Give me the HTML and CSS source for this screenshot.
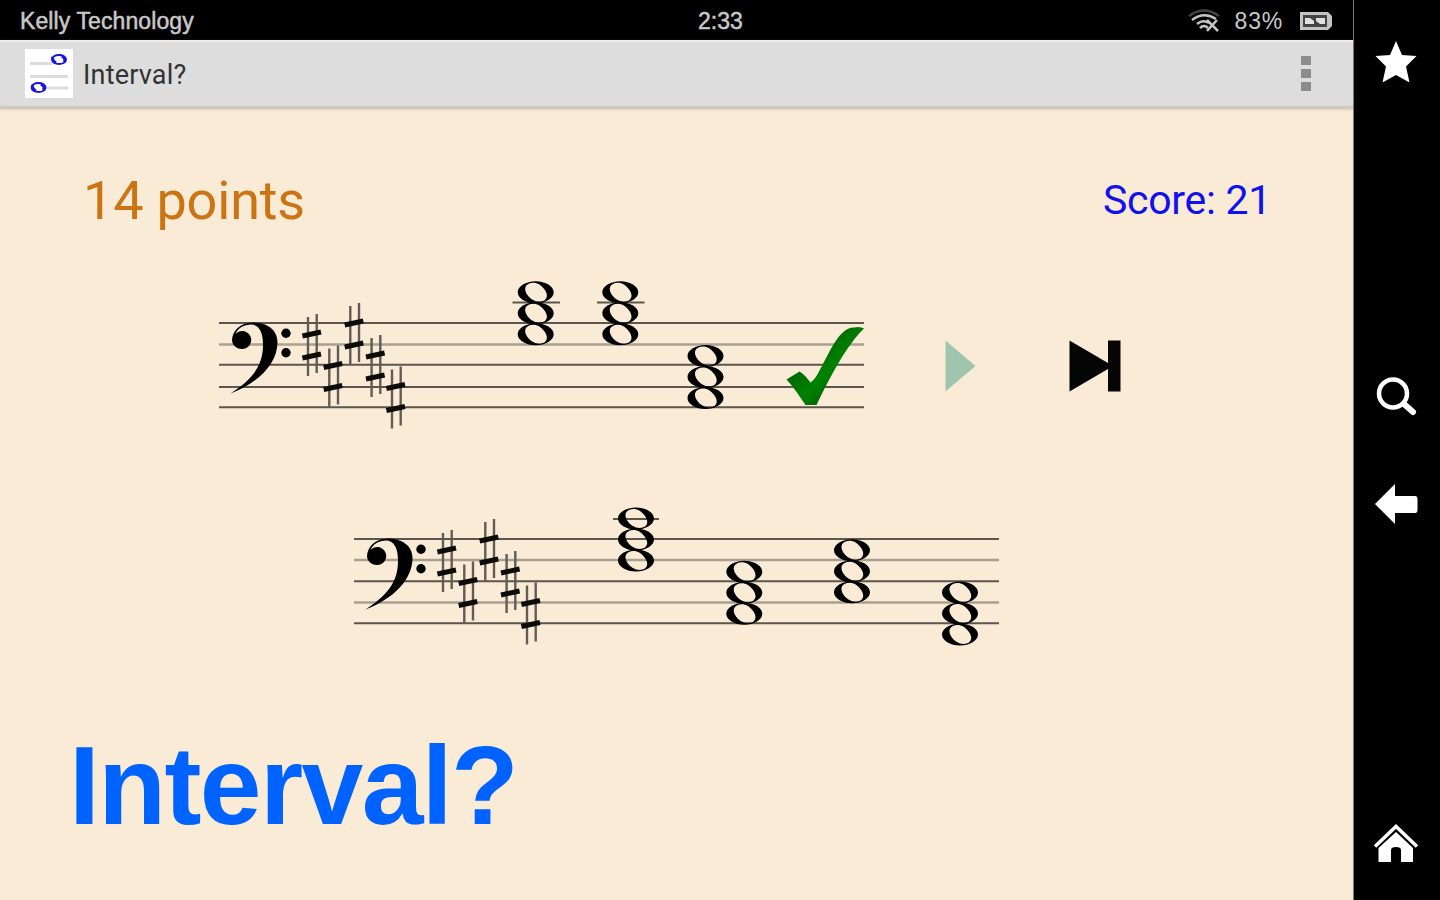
FILE: index.html
```html
<!DOCTYPE html>
<html lang="en">
<head>
    <meta charset="UTF-8">
    <meta name="viewport" content="width=device-width, initial-scale=1.0">
    <title>Interval?</title>
    <link rel="stylesheet" href="styles.css">
</head>
<body>
    <!-- Shared music symbols -->
    <svg class="symbols" width="0" height="0" aria-hidden="true">
        <symbol id="clef" overflow="visible">
            <path d="M11.5 113.5C39 103 58.5 84 58.5 62C58.5 49 47 42.5 34 42.5C21 42.5 13 51 13 61A10 9 0 0 0 23 69A9 9 0 1 0 16.5 54C19 48 25 44.5 32 44.5C40 44.5 44 52 44 65C44 87 32 100 11.5 113.5Z"/>
            <circle cx="67" cy="53.3" r="4.7"/>
            <circle cx="67" cy="72.7" r="4.7"/>
        </symbol>
        <symbol id="sharp" overflow="visible">
            <path class="sharp-stem" d="M-3.7 -28V31M5 -31V28"/>
            <path class="sharp-bar" d="M-9.3 -9L9.3 -13M-9.3 13L9.3 9"/>
        </symbol>
        <symbol id="note" overflow="visible">
            <path fill-rule="evenodd" d="M-18 0C-18 -6 -10 -11 0 -11S18 -6 18 0S10 11 0 11S-18 6 -18 0ZM-7 -8.5C-13 -6 -11 2 -4 7C1 10.2 6 10 9 8C14 4 10 -3 4 -7.5C0 -10 -4 -10 -7 -8.5Z"/>
        </symbol>
        <symbol id="chord" overflow="visible">
            <use href="#note" y="-21"/>
            <use href="#note"/>
            <use href="#note" y="21"/>
        </symbol>
        <symbol id="signature" overflow="visible">
            <use href="#clef"/>
            <use href="#sharp" x="92.7" y="65"/>
            <use href="#sharp" x="114" y="96.5"/>
            <use href="#sharp" x="135" y="54"/>
            <use href="#sharp" x="156.3" y="86"/>
            <use href="#sharp" x="176.7" y="117.5"/>
        </symbol>
        <linearGradient id="tickFill" x1="0" y1="0" x2="1" y2="1">
            <stop offset="0.25" stop-color="#005c00"/>
            <stop offset="0.55" stop-color="#008200"/>
            <stop offset="0.8" stop-color="#005c00"/>
        </linearGradient>
    </svg>

    <div class="device">
        <div class="screen">
            <div class="status-bar">
                <span class="owner">Kelly Technology</span>
                <span class="clock">2:33</span>
                <div class="status-icons">
                    <svg class="wifi" width="32" height="26" viewBox="0 0 32 26">
                        <path d="M1 8Q16 -3 31 8" stroke="#444"/>
                        <path d="M4 12Q16 3 28 11M9 16Q15 11 21 15M12 20Q16 16 20 20" stroke="#c4c4c4"/>
                        <path d="M19 12L30 23M29 12L19 23" stroke="#c4c4c4"/>
                    </svg>
                    <span class="battery-level">83%</span>
                    <svg width="35" height="20" viewBox="0 0 35 20">
                        <path d="M1 1H29L33 5V15L29 19H1Z" fill="#c4c4c4"/>
                        <rect x="4" y="4" width="24" height="12" fill="#444"/>
                        <path d="M6 7H11L15 10V13H6ZM17 7H26V13H21L17 10Z" fill="#e0e0e0"/>
                    </svg>
                </div>
            </div>

            <div class="action-bar">
                <svg class="app-icon" width="48" height="49" viewBox="0 0 48 49">
                    <rect width="48" height="49" fill="#fff"/>
                    <path d="M5 14.5H27M5 27.5H43M21 39H43" stroke="#dcdcdc" stroke-width="3"/>
                    <g fill="none" stroke="#1414e6">
                        <ellipse cx="34" cy="10.5" rx="7" ry="4.5" stroke-width="1.8"/>
                        <path d="M28 8Q26.5 11 31 14M37 7Q41.5 10 39 13" stroke-width="3"/>
                        <ellipse cx="13.5" cy="38.5" rx="7" ry="4.5" stroke-width="1.8"/>
                        <path d="M8 36Q6 39 11 42M16 35Q21 38 18 41" stroke-width="3"/>
                    </g>
                </svg>
                <span class="app-title">Interval?</span>
                <div class="overflow-menu"><i></i><i></i><i></i></div>
            </div>

            <div class="quiz">
                <div class="score-row">
                    <span class="points">14 points</span>
                    <span class="score">Score: 21</span>
                </div>

                <div class="question">
                    <svg class="staff" width="645" height="150" viewBox="0 0 645 150">
                        <path class="line" d="M0 43H645M0 84.8H645M0 107H645M0 127.3H645"/>
                        <path class="line soft" d="M0 64.5H645"/>
                        <path class="line" d="M293.5 22.5H341M378 22.5H425.5"/>
                        <use href="#signature"/>
                        <use href="#chord" x="316.7" y="33.2"/>
                        <use href="#chord" x="401.3" y="33.2"/>
                        <use href="#chord" x="486.5" y="97"/>
                        <path fill="url(#tickFill)" d="M567.5 99.5L580.5 91.5C585 94 588 98 591.5 102.5C596 100 599 93 603 86C613 67 622 47 635 47.5Q641 46 645 48.5C628 65 612 95 597.5 125H586.5C580 116 575 107 567.5 99.5Z"/>
                    </svg>
                    <svg class="play" width="31" height="52" viewBox="0 0 31 52">
                        <path d="M0.5 0.5L30.5 26L0.5 51.5Z" fill="#9fc5ae"/>
                    </svg>
                    <svg class="next" width="52" height="52" viewBox="0 0 52 52">
                        <path d="M0.5 0.5L39 23V0.5H51.5V51.5H39V29L0.5 51.5Z" fill="#050505"/>
                    </svg>
                </div>

                <svg class="staff answer" width="645" height="150" viewBox="0 0 645 150">
                    <path class="line" d="M0 43H645M0 85.2H645M0 127.3H645"/>
                    <path class="line soft" d="M0 64H645M0 106.5H645"/>
                    <path class="line" d="M259 23H305"/>
                    <use href="#signature"/>
                    <use href="#chord" x="282" y="43.5"/>
                    <use href="#chord" x="390.3" y="96.7"/>
                    <use href="#chord" x="498" y="75.3"/>
                    <use href="#chord" x="606" y="117.5"/>
                </svg>

                <h1 class="caption">Interval?</h1>
            </div>
        </div>

        <div class="side-bar">
            <svg class="star" width="42" height="42" viewBox="0 0 42 42">
                <path d="M21 0L27 14L41.5 15L31 25.5L34.5 41.5L21 34L7.5 41.5L11 25.5L0.5 15L15 14Z"/>
            </svg>
            <svg class="search" width="42" height="40" viewBox="0 0 42 40">
                <circle cx="18" cy="17.5" r="14" fill="none" stroke="#fff" stroke-width="4.5"/>
                <path d="M29 28L38 36" stroke="#fff" stroke-width="6" stroke-linecap="round"/>
            </svg>
            <svg class="back" width="43" height="40" viewBox="0 0 43 40">
                <path d="M0 20L20 0V12H40Q42.5 12 42.5 15V26Q42.5 29 40 29H20V40Z"/>
            </svg>
            <svg class="home" width="46" height="42" viewBox="0 0 46 42">
                <path d="M2 23.5L23 3.5L44 23.5" fill="none" stroke="#fff" stroke-width="3.5"/>
                <path d="M5.5 25L23 9L40 25V39H28V27Q28 24 23 24T18 27V39H5.5Z"/>
            </svg>
        </div>
    </div>
</body>
</html>
```

FILE: styles.css
```css
body {
    margin: 0;
    background-color: #000;
    font-family: Roboto, sans-serif;
}
svg {
    display: block;
    flex-shrink: 0;
}
.symbols {
    position: absolute;
}
.device {
    display: flex;
    width: 1440px;
    height: 900px;
    overflow: hidden;
}
.screen {
    display: flex;
    flex-direction: column;
    width: 1353px;
    border-right: 1px solid #807870;
}
.status-bar {
    display: grid;
    grid-template-columns: 678px auto 1fr;
    align-items: center;
    box-sizing: border-box;
    height: 40px;
    padding: 0 19px 0 20px;
    background-color: #000;
    color: #c8c8c8;
    font-family: "Liberation Sans", sans-serif;
    font-size: 23px;
    line-height: 42px;
}
.owner,
.clock {
    -webkit-text-stroke: 0.5px #c8c8c8;
}
.owner {
    letter-spacing: 0.1px;
}
.status-icons {
    display: flex;
    justify-content: flex-end;
    align-items: center;
}
.wifi {
    fill: none;
    stroke-width: 2.5;
}
.battery-level {
    margin: 0 16px 0 15px;
    letter-spacing: 0.8px;
}
.action-bar {
    display: flex;
    align-items: center;
    box-sizing: border-box;
    height: 68px;
    padding: 0 42px 2px 25px;
    background-color: #ddd;
    border-top: 2px solid #eee;
    border-bottom: 2px solid #cbc8c4;
    box-shadow: 0 1px 3px rgba(120, 100, 80, 0.4);
    z-index: 1;
}
.app-title {
    margin: 4px 0 0 10px;
    color: #333;
    font-size: 27px;
    letter-spacing: 0.2px;
}
.overflow-menu {
    display: flex;
    flex-direction: column;
    gap: 4px;
    margin-left: auto;
}
.overflow-menu i {
    width: 10px;
    height: 9px;
    background-color: #8c8c8c;
}
.quiz {
    flex: 1;
    background-color: #faebd7;
}
.score-row {
    display: flex;
    justify-content: space-between;
    align-items: center;
    height: 80px;
    padding: 52px 82px 0 83px;
}
.points {
    color: #cc7314;
    font-size: 54px;
    letter-spacing: -0.2px;
}
.score {
    color: #1010f0;
    font-size: 41px;
    letter-spacing: -0.3px;
}
.question {
    display: flex;
    align-items: center;
    height: 150px;
    margin: 40px 0 0 219px;
}
.staff {
    overflow: visible;
}
.line {
    fill: none;
    stroke: #5c564e;
    stroke-width: 2;
}
.line.soft {
    stroke: #aaa092;
    stroke-width: 2.6;
}
.sharp-stem {
    fill: none;
    stroke: #625c54;
    stroke-width: 2.4;
}
.sharp-bar {
    fill: none;
    stroke: #0c0c0c;
    stroke-width: 5;
}
.play {
    margin: 22px 0 0 81px;
}
.next {
    margin: 22px 0 0 93px;
}
.answer {
    margin: 66px 0 0 354px;
}
.caption {
    margin: 78px 0 0 69px;
    color: #0062ff;
    font-family: "Liberation Sans", sans-serif;
    font-size: 111px;
    font-weight: bold;
    line-height: 124px;
    letter-spacing: -1.6px;
}
.side-bar {
    display: flex;
    flex-direction: column;
    align-items: center;
    flex: 1;
    padding-right: 2px;
    fill: #fff;
}
.star {
    margin-top: 41px;
}
.search {
    margin-top: 293px;
}
.back {
    margin-top: 68px;
}
.home {
    margin-top: 299px;
}
```
